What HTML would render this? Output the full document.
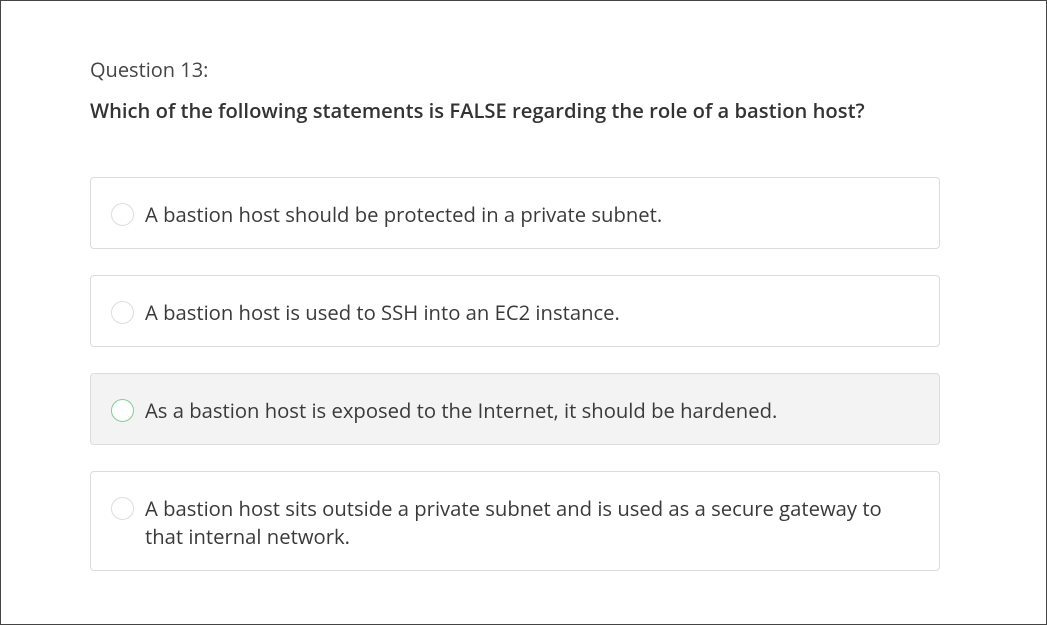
<!DOCTYPE html>
<html><head><meta charset="utf-8"><style>
html,body{margin:0;padding:0;}
body{width:1047px;height:625px;position:relative;overflow:hidden;background:#fff;font-family:"Open Sans","Liberation Sans",sans-serif;color:#333;}
.frame{position:absolute;left:0;top:0;width:1045px;height:623px;border:1px solid #444;}
.q{position:absolute;left:90px;top:56px;font-size:20px;color:#444;}
.t{position:absolute;left:90px;top:96px;font-size:20.2px;font-weight:600;color:#333;}
.opt{position:absolute;left:90px;width:848px;border:1px solid #dcdcdc;border-radius:4px;background:#fff;}
.opt.sel{background:#f3f3f3;}
.r{position:absolute;left:20px;width:21px;height:21px;border:1px solid #ddd;border-radius:50%;background:#fff;}
.sel .r{border-color:#7fcf8f;}
.lbl{position:absolute;left:54px;font-size:20.25px;line-height:28px;color:#3a3a3a;white-space:nowrap;}
</style></head><body>
<div class="frame"></div>
<div class="q">Question 13:</div>
<div class="t">Which of the following statements is FALSE regarding the role of a bastion host?</div>
<div class="opt" style="top:177px;height:70px"><div class="r" style="top:25px"></div><div class="lbl" style="top:22px">A bastion host should be protected in a private subnet.</div></div>
<div class="opt" style="top:275px;height:70px"><div class="r" style="top:25px"></div><div class="lbl" style="top:22px">A bastion host is used to SSH into an EC2 instance.</div></div>
<div class="opt sel" style="top:373px;height:70px"><div class="r" style="top:25px"></div><div class="lbl" style="top:22px">As a bastion host is exposed to the Internet, it should be hardened.</div></div>
<div class="opt" style="top:471px;height:98px"><div class="r" style="top:25px"></div><div class="lbl" style="top:22px">A bastion host sits outside a private subnet and is used as a secure gateway to<br>that internal network.</div></div>
</body></html>
